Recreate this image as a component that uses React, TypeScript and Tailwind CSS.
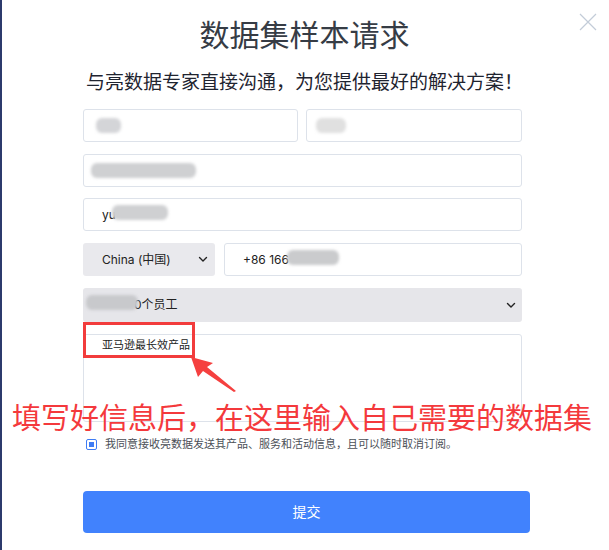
import React from 'react';

const Blur = ({ w, tone = 'bg-[#d4d5d8]' }: { w: string; tone?: string }) => (
  <span className={`inline-block h-[15px] ${w} ${tone} rounded-[6px] blur-[1.5px]`} />
);

const Chevron = () => (
  <svg width="10" height="7" viewBox="0 0 10 7" fill="none" className="shrink-0">
    <path d="M1.5 1.5L5 5L8.5 1.5" stroke="#222" strokeWidth="1.4" strokeLinecap="round" strokeLinejoin="round" />
  </svg>
);

export default function App() {
  return (
    <div
      className="relative w-[609px] h-[550px] bg-white flex overflow-hidden"
      style={{ fontFamily: 'Inter, "Noto Sans CJK SC", sans-serif' }}
    >
      {/* edge of page behind the modal */}
      <div className="w-[2px] h-full bg-[#2c3a6c] shrink-0" />

      <div className="flex-1 flex flex-col">
        <h1 className="mt-[16px] text-center text-[30px] leading-[38px] text-[#363c45] font-normal mr-[2px]">
          数据集样本请求
        </h1>
        <p className="mt-[17px] text-center text-[19px] leading-[24px] text-[#1f2430] mr-[2px]">
          与亮数据专家直接沟通，为您提供最好的解决方案！
        </p>

        <div className="mt-[14px] ml-[81px] w-[439px] flex flex-col text-[12px] text-[#222]">
          <div className="flex gap-2">
            <div className="w-[215px] h-[33px] border border-[#dde2ea] rounded-[3px] flex items-center pl-[12px]">
              <Blur w="w-[25px]" />
            </div>
            <div className="flex-1 h-[33px] border border-[#dde2ea] rounded-[3px] flex items-center pl-[9px]">
              <Blur w="w-[30px]" tone="bg-[#e0e0e0]" />
            </div>
          </div>

          <div className="mt-[12px] h-[33px] border border-[#dde2ea] rounded-[3px] flex items-center pl-[7px]">
            <Blur w="w-[105px]" tone="bg-[#cfd0d2]" />
          </div>

          <div className="mt-[11px] h-[33px] border border-[#dde2ea] rounded-[3px] flex items-center pl-[18px]">
            <span>yu</span>
            <span className="-ml-[4px]"><Blur w="w-[56px]" tone="bg-[#cfd0d2]" /></span>
          </div>

          <div className="mt-[12px] flex gap-[9px]">
            <div className="w-[132px] h-[33px] bg-[#e9e9ed] rounded-[3px] flex items-center justify-between pl-[19px] pr-[7px]">
              <span>China (中国)</span>
              <Chevron />
            </div>
            <div className="flex-1 h-[33px] border border-[#dde2ea] rounded-[3px] flex items-center pl-[18px]">
              <span>+86 166</span>
              <span className="-ml-[2px]"><Blur w="w-[52px]" tone="bg-[#cacbcd]" /></span>
            </div>
          </div>

          <div className="mt-[12px] h-[34px] bg-[#e6e6ea] rounded-[3px] flex items-center justify-between pl-[3px] pr-[6px]">
            <span className="flex items-center">
              <span className="relative z-10"><Blur w="w-[52px]" tone="bg-[#c8c9cc]" /></span>
              <span className="-ml-[4px]">0个员工</span>
            </span>
            <Chevron />
          </div>

          <div className="mt-[12px] h-[88px] border border-[#dde2ea] rounded-[3px] pl-[18px] pt-[2px] text-[11px] leading-[16px]">
            亚马逊最长效产品
          </div>

          <div className="mt-[14px] flex items-center gap-[8px] pl-[3px]">
            <span className="w-[11px] h-[11px] border-[1.5px] border-[#3f7cf4] rounded-[2px] flex items-center justify-center">
              <span className="w-[5px] h-[5px] bg-[#3f7cf4]" />
            </span>
            <span className="text-[11px] text-[#4b4f57]">
              我同意接收亮数据发送其产品、服务和活动信息，且可以随时取消订阅。
            </span>
          </div>
        </div>

        <button className="mt-[38px] ml-[81px] w-[447px] h-[42px] rounded-[4px] bg-[#4182fd] text-white text-[14px]">
          提交
        </button>
      </div>

      {/* close */}
      <svg className="absolute left-[579px] top-[13px]" width="18" height="18" viewBox="0 0 18 18" fill="none">
        <path d="M1 1L17 17M17 1L1 17" stroke="#c3ccd8" strokeWidth="1.2" />
      </svg>

      {/* red annotation */}
      <div className="absolute left-[83px] top-[322px] w-[112px] h-[36px] border-[3px] border-[#f23c3c]" />
      <svg className="absolute left-[185px] top-[352px]" width="56" height="44" viewBox="0 0 56 44">
        <polygon points="6,5 28,11 22,15 51,39 49,40 18,19 13,25" fill="#f5403f" />
      </svg>
      <div className="absolute left-[12px] top-[401px] text-[29px] leading-[36px] text-[#f4393c] whitespace-nowrap">
        填写好信息后，在这里输入自己需要的数据集
      </div>
    </div>
  );
}
